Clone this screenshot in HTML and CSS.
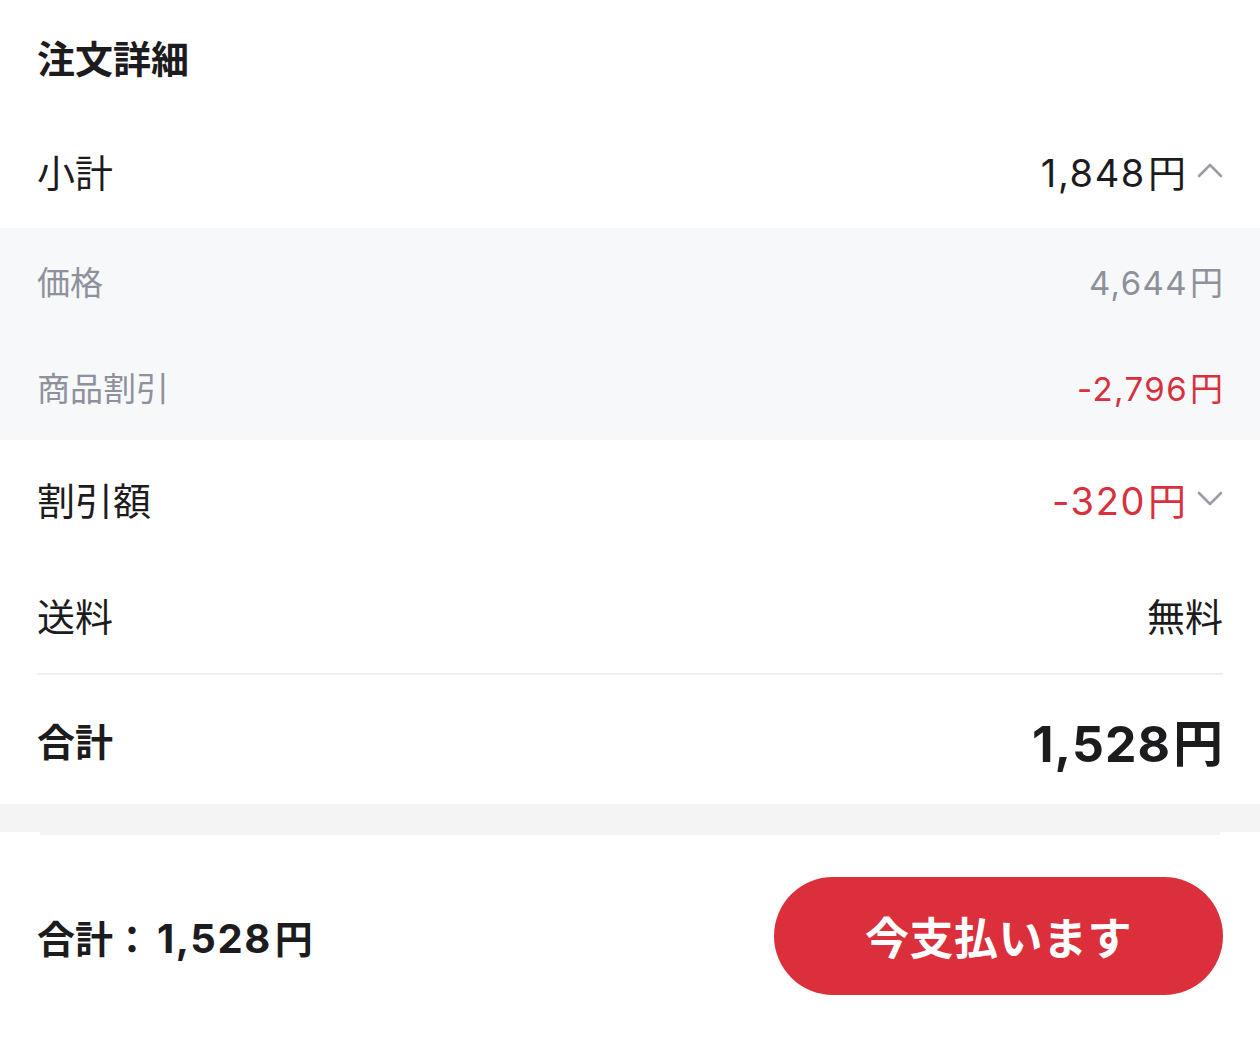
FILE: index.html
```html
<!DOCTYPE html>
<html lang="ja">
<head>
    <meta charset="UTF-8">
    <meta name="viewport" content="width=device-width, initial-scale=1.0">
    <title>注文詳細</title>
    <link rel="stylesheet" href="styles.css">
</head>
<body>
    <section class="order-details">
        <h2 class="section-title">注文詳細</h2>

        <div class="row">
            <span class="label">小計</span>
            <span class="value">
                <span class="amount">1,848<span class="yen">円</span></span>
                <svg class="chevron" viewBox="0 0 26 26"><polyline points="2,18 13,7 24,18"/></svg>
            </span>
        </div>

        <div class="sub-rows">
            <div class="row sub">
                <span class="label">価格</span>
                <span class="amount">4,644<span class="yen">円</span></span>
            </div>
            <div class="row sub">
                <span class="label">商品割引</span>
                <span class="amount discount">-2,796<span class="yen">円</span></span>
            </div>
        </div>

        <div class="row tall">
            <span class="label">割引額</span>
            <span class="value">
                <span class="amount discount">-320<span class="yen">円</span></span>
                <svg class="chevron" viewBox="0 0 26 26"><polyline points="2,8 13,19 24,8"/></svg>
            </span>
        </div>

        <div class="row tall">
            <span class="label">送料</span>
            <span class="label">無料</span>
        </div>

        <div class="row total">
            <span class="label">合計</span>
            <span class="amount">1,528<span class="yen">円</span></span>
        </div>
    </section>

    <div class="gap-band"><div class="gap-edge"></div></div>

    <footer class="pay-bar">
        <div class="pay-total">合計：<span class="pay-amount">1,528<span class="yen">円</span></span></div>
        <button class="pay-btn">今支払います</button>
    </footer>
</body>
</html>
```

FILE: styles.css
```css
:root {
    --text-main: #1c1c1e;
    --text-muted: #8e919c;
    --accent-red: #d8313d;
    --btn-red: #dc2f3c;
    --sub-bg: #f7f8fa;
    --band-bg: #f4f4f4;
    --chevron: #9a9ca6;
}

* {
    margin: 0;
    padding: 0;
    box-sizing: border-box;
}

body {
    font-family: Inter, "Noto Sans CJK JP", sans-serif;
    color: var(--text-main);
    background: #fff;
    width: 1260px;
    min-height: 1060px;
}

.section-title {
    font-family: "Noto Sans CJK JP", sans-serif;
    font-size: 38px;
    font-weight: 700;
    height: 113px;
    padding: 0 37px;
    display: flex;
    align-items: center;
}

.row {
    display: flex;
    justify-content: space-between;
    align-items: center;
    height: 115px;
    padding: 0 37px;
    font-size: 38px;
}

.row.tall {
    height: 116.5px;
}

.label {
    font-family: "Noto Sans CJK JP", sans-serif;
}

.value {
    display: flex;
    align-items: center;
    gap: 11px;
}

.amount {
    font-family: Inter, "Noto Sans CJK JP", sans-serif;
    letter-spacing: 1.6px;
}

.yen {
    font-family: "Noto Sans CJK JP", sans-serif;
    margin-left: 2px;
    letter-spacing: 0;
}

.discount {
    color: var(--accent-red);
}

.chevron {
    width: 26px;
    height: 26px;
    fill: none;
    stroke: var(--chevron);
    stroke-width: 2.6;
    stroke-linecap: round;
    stroke-linejoin: round;
}

.sub-rows {
    background: var(--sub-bg);
}

.row.sub {
    height: 106px;
    font-size: 33px;
    color: var(--text-muted);
}

.row.sub .amount {
    letter-spacing: 1.4px;
}

.row.total {
    height: 131px;
    margin: 0 37px;
    padding: 0;
    border-top: 2px solid #efefef;
    font-weight: 700;
}

.row.total .amount {
    font-size: 50px;
    font-weight: 700;
    letter-spacing: 1px;
}

.gap-band {
    height: 28px;
    background: var(--band-bg);
    position: relative;
}

.gap-edge {
    position: absolute;
    left: 40px;
    right: 40px;
    bottom: -3px;
    height: 3px;
    background: var(--band-bg);
}

.pay-bar {
    display: flex;
    justify-content: space-between;
    align-items: center;
    padding: 45px 37px 0;
}

.pay-total {
    font-family: "Noto Sans CJK JP", sans-serif;
    font-size: 38px;
    font-weight: 700;
}

.pay-amount {
    font-family: Inter, "Noto Sans CJK JP", sans-serif;
    font-size: 40px;
    margin-left: 6px;
    letter-spacing: 1.5px;
}

.pay-amount .yen {
    font-size: 38px;
    margin-left: 3px;
}

.pay-btn {
    width: 449px;
    height: 118px;
    border: none;
    border-radius: 59px;
    background: var(--btn-red);
    color: #fff;
    font-family: "Noto Sans CJK JP", sans-serif;
    font-size: 44px;
    font-weight: 700;
    letter-spacing: 0.5px;
    cursor: pointer;
}
```
